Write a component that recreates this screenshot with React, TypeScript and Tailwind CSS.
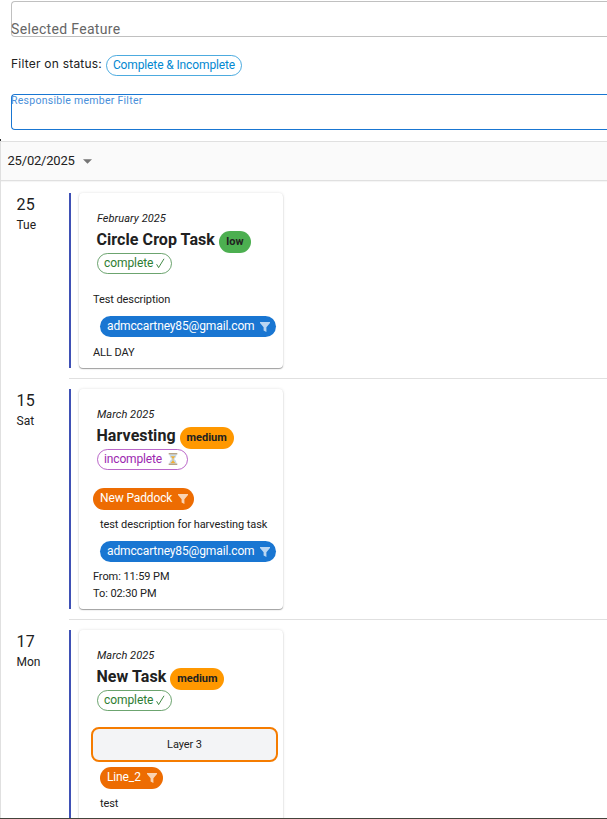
import { useState } from 'react';
import type { ReactNode } from 'react';

type Priority = 'low' | 'medium';
type Status = 'complete' | 'incomplete';

interface Task {
  id: number;
  day: string;
  weekday: string;
  month: string;
  title: string;
  priority: Priority;
  status: Status;
  rowHeight: string;
  body: ReactNode;
}

const priorityStyles: Record<Priority, string> = {
  low: 'w-8 bg-[#4caf50]',
  medium: 'w-[54px] bg-[#ff9800]'
};

function FilterIcon() {
  return (
    <svg viewBox="0 0 10 10" className="w-2.5 h-2.5 shrink-0 fill-white/70">
      <path d="M0 0h10v1L6.4 5.2V10L3.6 8.6V5.2L0 1z" />
    </svg>
  );
}

function HourglassIcon() {
  return (
    <svg viewBox="0 0 10 12" className="w-2.5 h-3 shrink-0">
      <path d="M1.5 1.5h7c0 2.500-1 3.500-2.500 4.500 1.500 1 2.500 2 2.500 4.500h-7C1.500 8 2.500 7 4 6 2.500 5 1.500 4 1.500 1.500z" fill="#c3daea" />
      <path d="M2.700 3.200h4.600L5.400 5.500v2.200l2.200 2.500H2.400l2.200-2.500V5.500z" fill="#f2ae35" />
      <path d="M.7 0h8.600v1.500H.7zM.7 10.500h8.600V12H.7z" fill="#b5a488" />
    </svg>
  );
}

function StatusChip({ status }: { status: Status }) {
  if (status === 'complete') {
    return (
      <div className="flex items-center w-[75px] h-[21px] pl-1.5 pb-px border border-[#2e7d32b3] rounded-full text-[12px] text-[#2e7d32] whitespace-nowrap">
        <span className="tracking-[-0.08px]">complete</span>
        <svg viewBox="0 0 9 11" className="w-[9px] h-[11px] ml-[3px] fill-none stroke-[#2e7d32]">
          <path d="M.6 6.200 2.600 9.600 8 .8" strokeWidth="0.9" />
        </svg>
      </div>
    );
  }
  return (
    <div className="flex items-center w-[91px] h-[21px] pl-1.5 pb-px border border-[#9c27b0b3] rounded-full text-[12px] text-[#9c27b0] whitespace-nowrap">
      <span className="w-[64px] tracking-[-0.15px]">incomplete</span>
      <HourglassIcon />
    </div>
  );
}

function FilterChip({ label, className }: { label: string; className: string }) {
  return (
    <button className={`flex items-center justify-between pl-[7px] pr-1.5 rounded-full text-[12px] tracking-[-0.13px] text-white whitespace-nowrap ${className}`}>
      <span className="pb-0.5">{label}</span>
      <FilterIcon />
    </button>
  );
}

const tasks: Task[] = [
  {
    id: 1,
    day: '25',
    weekday: 'Tue',
    month: 'February 2025',
    title: 'Circle Crop Task',
    priority: 'low',
    status: 'complete',
    rowHeight: 'h-[196px]',
    body: (
      <>
        <p className="mt-[18px] h-4 leading-4">Test description</p>
        <FilterChip label="admccartney85@gmail.com" className="mt-2 ml-[7px] w-44 h-[21px] bg-[#1976d2]" />
        <p className="mt-2 h-4 leading-4">ALL DAY</p>
      </>
    )
  },
  {
    id: 2,
    day: '15',
    weekday: 'Sat',
    month: 'March 2025',
    title: 'Harvesting',
    priority: 'medium',
    status: 'incomplete',
    rowHeight: 'h-[241px]',
    body: (
      <>
        <FilterChip label="New Paddock" className="mt-[18px] w-[101px] h-[22px] bg-[#ed6c02]" />
        <p className="mt-[7px] ml-[7px] h-4 leading-4">test description for harvesting task</p>
        <FilterChip label="admccartney85@gmail.com" className="mt-2 ml-[7px] w-44 h-[21px] bg-[#1976d2]" />
        <p className="mt-1.5 h-[17px] leading-[17px]">From: 11:59 PM</p>
        <p className="h-[17px] leading-[17px]">To: 02:30 PM</p>
      </>
    )
  },
  {
    id: 3,
    day: '17',
    weekday: 'Mon',
    month: 'March 2025',
    title: 'New Task',
    priority: 'medium',
    status: 'complete',
    rowHeight: 'h-[241px]',
    body: (
      <>
        <button className="mt-4 -ml-0.5 w-[187px] h-[35px] pt-px border-2 border-[#f57c00] rounded-lg bg-[#f3f4f6]">
          Layer 3
        </button>
        <FilterChip label="Line_2" className="mt-[5px] ml-[7px] w-[63px] h-[22px] bg-[#ed6c02]" />
        <p className="mt-[7px] ml-[7px] h-4 leading-4">test</p>
      </>
    )
  }
];

function TaskCard({ task }: { task: Task }) {
  return (
    <article className="w-[204px] pl-3.5 pt-[17px] rounded bg-white text-[11px] tracking-[-0.08px] shadow-[0_1px_1px_rgba(0,0,0,0.35),0_0_3px_rgba(0,0,0,0.12)]">
      <div className="pl-1">
        <p className="h-[17px] leading-[17px] italic tracking-[0.05px]">{task.month}</p>
        <div className="flex h-[26px] items-start">
          <h2 className="-ml-[0.5px] text-[16px] leading-[26px] font-bold tracking-[0.07px] whitespace-nowrap">{task.title}</h2>
          <span className={`flex items-center justify-center mt-1 ml-1 h-[22px] rounded-full font-bold tracking-normal ${priorityStyles[task.priority]}`}>
            {task.priority}
          </span>
        </div>
        <StatusChip status={task.status} />
      </div>
      {task.body}
    </article>
  );
}

function AgendaRow({ task }: { task: Task }) {
  return (
    <li className={`flex shrink-0 ${task.rowHeight}`}>
      <div className="w-[68px] shrink-0 pl-[15.5px] pt-[11px]">
        <div className="text-[16px] leading-[22px] tracking-[0.2px]">{task.day}</div>
        <div className="text-[12px] leading-[19px]">{task.weekday}</div>
      </div>
      <div className="flex flex-1 pt-2.5 pb-2.5 border-b border-[#e0e0e0]">
        <div className="w-0.5 mr-2 bg-[#3f51b5]" />
        <TaskCard task={task} />
      </div>
    </li>
  );
}

export default function App() {
  const [date] = useState('25/02/2025');

  return (
    <div className="relative flex flex-col w-full h-[819px] overflow-hidden bg-white border-b border-[#44443c] font-['Roboto',sans-serif] text-[#212121]">
      <span className="absolute left-0 top-[139px] w-px h-0.5 bg-[#333333]" />
      <section className="flex flex-col h-[141px] shrink-0 pl-[11px] pt-px">
        <div className="flex items-end h-9 border border-r-0 border-[#c0c0c0] rounded-l">
          <span className="-ml-px -mb-px text-[14px] leading-4 tracking-[0.33px] text-[#666666]">Selected Feature</span>
        </div>
        <div className="flex items-center h-[57px]">
          <span className="w-[91px] font-['Inter',sans-serif] text-[12px] tracking-[0.22px] pb-[3px] whitespace-nowrap">Filter on status:</span>
          <button className="flex items-center justify-center ml-1 w-[136px] h-[21px] pb-px border border-[#0288d1b3] rounded-full text-[12px] tracking-[-0.12px] text-[#0288d1] whitespace-nowrap">
            Complete &amp; Incomplete
          </button>
        </div>
        <div className="h-9 border border-r-0 border-[#1976d2] rounded-l">
          <span className="block -ml-px text-[10.5px] leading-3 tracking-[0.27px] text-[#4a90da]">Responsible member Filter</span>
        </div>
      </section>

      <main className="flex flex-col flex-1 min-h-0 border-l border-t border-[#e0e0e0]">
        <header className="flex items-center h-[39px] shrink-0 pl-[6.5px] border-b border-[#e0e0e0] bg-[#fafafa] shadow-[0_1px_1px_rgba(0,0,0,0.04)]">
          <span className="w-[67px] pb-px text-[13px] tracking-[-0.2px] whitespace-nowrap">{date}</span>
          <svg viewBox="0 0 10 5" className="w-[9px] h-[5px] ml-2 fill-[#757575]">
            <path d="M0 0h10L5 5z" />
          </svg>
        </header>
        <ul className="flex flex-col flex-1 pt-0.5 overflow-hidden">
          {tasks.map((task) => (
            <AgendaRow key={task.id} task={task} />
          ))}
        </ul>
      </main>
    </div>
  );
}
